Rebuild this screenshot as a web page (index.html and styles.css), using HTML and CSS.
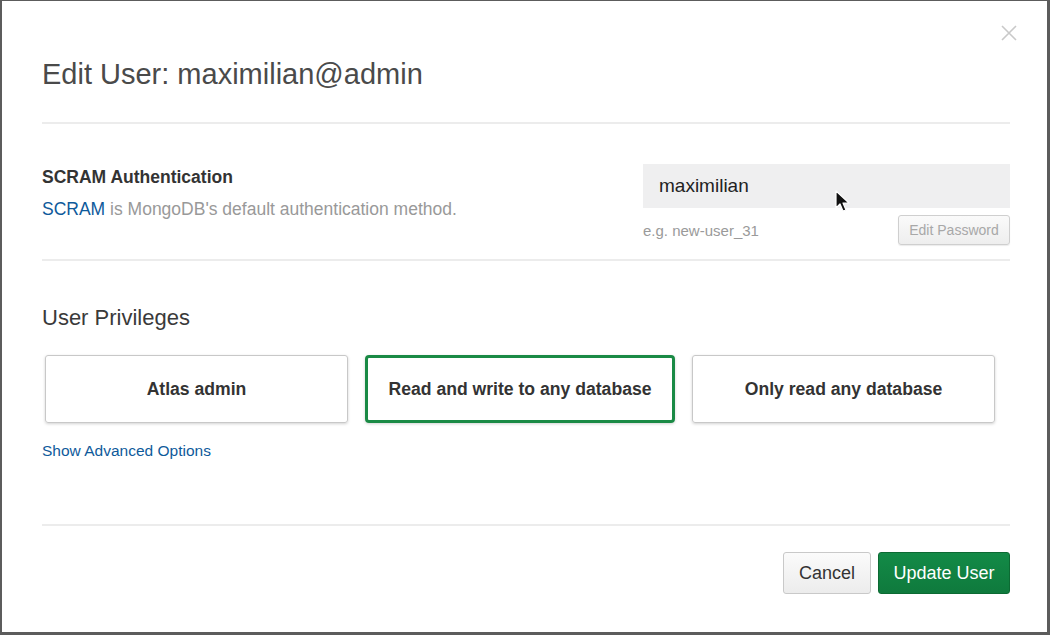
FILE: index.html
```html
<!DOCTYPE html>
<html>
<head>
<meta charset="utf-8">
<link rel="stylesheet" href="styles.css">
</head>
<body>
<div class="modal">
  <span class="close">
    <svg width="16" height="16" viewBox="0 0 16 16"><path d="M1 1L15 15M15 1L1 15" stroke="#c9c9c9" stroke-width="1.6" fill="none"/></svg>
  </span>
  <h1 class="title">Edit User: maximilian@admin</h1>
  <div class="divider"></div>
  <div class="auth">
    <div class="auth-info">
      <div class="auth-title">SCRAM Authentication</div>
      <div class="auth-desc"><a class="link">SCRAM</a> is MongoDB's default authentication method.</div>
    </div>
    <div class="auth-fields">
      <div class="input">maximilian</div>
      <div class="field-row">
        <span class="hint">e.g. new-user_31</span>
        <button class="btn-small">Edit Password</button>
      </div>
    </div>
  </div>
  <div class="divider"></div>
  <h2 class="section">User Privileges</h2>
  <div class="cards">
    <div class="card">Atlas admin</div>
    <div class="card selected">Read and write to any database</div>
    <div class="card">Only read any database</div>
  </div>
  <a class="link adv">Show Advanced Options</a>
  <div class="divider footer-div"></div>
  <div class="footer">
    <button class="btn cancel">Cancel</button>
    <button class="btn primary">Update User</button>
  </div>
  <svg class="cursor" width="16" height="24" viewBox="0 0 16 24"><path d="M1 1 L1 18 L5 14 L8 21 L11 20 L8 13 L14 13 Z" fill="#111" stroke="#fff" stroke-width="1.2" stroke-linejoin="round"/></svg>
</div>
</body>
</html>
```
FILE: styles.css
```css
html, body {
  margin: 0;
  padding: 0;
}
body {
  background: #5c5c5c;
  width: 1050px;
  height: 635px;
  overflow: hidden;
  font-family: "Liberation Sans", Arial, sans-serif;
}
.modal {
  position: relative;
  box-sizing: border-box;
  margin: 1px 0 0 2px;
  width: 1045px;
  height: 631px;
  background: #fff;
  padding: 0 37px 0 40px;
  display: flex;
  flex-direction: column;
}
.close {
  position: absolute;
  top: 24px;
  right: 30px;
  display: block;
  line-height: 0;
}
.title {
  margin: 56px 0 0 0;
  font-size: 29px;
  font-weight: normal;
  color: #4a4a4a;
  line-height: 34px;
}
.divider {
  height: 2px;
  background: #ececec;
}
.title + .divider {
  margin-top: 31px;
}
.auth {
  display: flex;
  justify-content: space-between;
  height: 135px;
  box-sizing: border-box;
  padding-top: 40px;
}
.auth-title {
  font-size: 17.5px;
  font-weight: bold;
  color: #333;
  line-height: 20px;
  margin-top: 3px;
}
.auth-desc {
  font-size: 17.5px;
  color: #999;
  margin-top: 12px;
  line-height: 20px;
}
.link {
  color: #0e5a9b;
  text-decoration: none;
}
.auth-fields {
  width: 367px;
}
.input {
  height: 44px;
  background: #efeff0;
  box-sizing: border-box;
  padding-left: 16px;
  font-size: 19px;
  line-height: 44px;
  color: #222;
}
.field-row {
  display: flex;
  justify-content: space-between;
  align-items: center;
  margin-top: 7px;
}
.hint {
  font-size: 15px;
  color: #9a9a9a;
}
.btn-small {
  width: 112px;
  height: 30px;
  border: 1px solid #cfcfcf;
  border-radius: 3px;
  background: linear-gradient(#fafafa, #eeeeee);
  color: #a8a8a8;
  font-family: "Liberation Sans", Arial, sans-serif;
  font-size: 14px;
  padding: 0;
  box-shadow: 0 1px 1px rgba(0,0,0,0.08);
}
.section {
  margin: 43px 0 0 0;
  font-size: 22px;
  font-weight: normal;
  color: #3a3a3a;
  line-height: 28px;
}
.cards {
  display: flex;
  gap: 17px;
  margin-top: 23px;
  padding-left: 3px;
  width: 950px;
}
.card {
  flex: 1;
  height: 68px;
  box-sizing: border-box;
  border: 1px solid #c8c8c8;
  border-radius: 3px;
  box-shadow: 0 1px 3px rgba(0,0,0,0.18);
  display: flex;
  align-items: center;
  justify-content: center;
  font-size: 17.6px;
  font-weight: bold;
  color: #333;
}
.card.selected {
  border: 3px solid #1a8a45;
  border-radius: 4px;
  flex: 1.01;
}
.adv {
  font-size: 15.5px;
  margin-top: 19px;
  line-height: 18px;
}
.footer-div {
  margin-top: 64px;
}
.footer {
  display: flex;
  justify-content: flex-end;
  gap: 7px;
  margin-top: 26px;
}
.btn {
  height: 42px;
  border-radius: 3px;
  font-family: "Liberation Sans", Arial, sans-serif;
  font-size: 18px;
  padding: 0;
}
.cancel {
  width: 88px;
  border: 1px solid #c9c9c9;
  background: linear-gradient(#fbfbfb, #ececec);
  color: #333;
}
.primary {
  width: 132px;
  border: 1px solid #0c6a33;
  background: linear-gradient(#138a47, #0f7a3d);
  color: #fff;
}
.cursor {
  position: absolute;
  left: 833px;
  top: 189px;
}
```
